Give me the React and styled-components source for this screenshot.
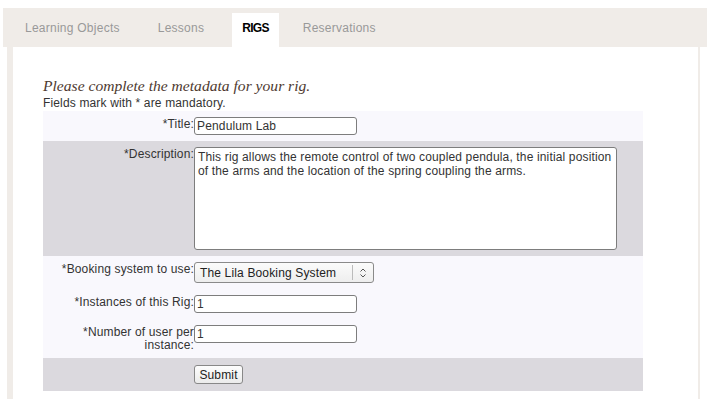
import React from 'react'
import styled, { createGlobalStyle } from 'styled-components'

const GlobalStyle = createGlobalStyle`
  html, body {
    margin: 0;
    padding: 0;
    background: #ffffff;
    overflow: hidden;
  }
  body {
    font-family: "Liberation Sans", Arial, sans-serif;
    font-size: 12px;
    letter-spacing: 0.15px;
    color: #333333;
  }
`

const tabs = ['Learning Objects', 'Lessons', 'RIGS', 'Reservations']

const fields = [
  { label: '*Title:', kind: 'input', value: 'Pendulum Lab', shade: 'light' },
  { label: '*Description:', kind: 'textarea', shade: 'dark',
    value: 'This rig allows the remote control of two coupled pendula, the initial position of the arms and the location of the spring coupling the arms.' },
  { label: '*Booking system to use:', kind: 'select', value: 'The Lila Booking System', shade: 'light' },
  { label: '*Instances of this Rig:', kind: 'input', value: '1', shade: 'light' },
  { label: '*Number of user per instance:', kind: 'input', value: '1', shade: 'light' },
]

function App() {
  return (
    <Page>
      <GlobalStyle />
      <TabBar>
        {tabs.map((t) => (
          <Tab key={t} active={t === 'RIGS'}>{t}</Tab>
        ))}
      </TabBar>
      <Panel>
        <Heading>Please complete the metadata for your rig.</Heading>
        <Note>Fields mark with * are mandatory.</Note>
        <Form>
          {fields.map((f) => (
            <Row key={f.label} shade={f.shade}>
              <Label>{f.label}</Label>
              <Cell>
                {f.kind === 'input' && <TextInput defaultValue={f.value} spellCheck={false} />}
                {f.kind === 'textarea' && <TextArea defaultValue={f.value} spellCheck={false} />}
                {f.kind === 'select' && (
                  <FakeSelect>
                    <span>{f.value}</span>
                    <Arrows>
                      <svg width="8" height="10" viewBox="0 0 8 10">
                        <path d="M1.5 3.5 L4 1 L6.5 3.5 M1.5 6.5 L4 9 L6.5 6.5" fill="none" stroke="#555" strokeWidth="1" />
                      </svg>
                    </Arrows>
                  </FakeSelect>
                )}
              </Cell>
            </Row>
          ))}
          <Row shade="dark">
            <Label />
            <Cell>
              <SubmitButton>Submit</SubmitButton>
            </Cell>
          </Row>
        </Form>
      </Panel>
    </Page>
  )
}

const Page = styled.div`
  padding: 8px 0 0 3px;
  width: 720px;
`

const TabBar = styled.div`
  display: flex;
  align-items: flex-end;
  height: 39px;
  background: #f0ece8;
  padding-left: 12px;
`

const Tab = styled.div`
  height: 34px;
  line-height: 30px;
  padding: 0 10px;
  margin-right: ${(p) => (p.active ? '14px' : '18px')};
  font-size: 12px;
  color: ${(p) => (p.active ? '#000000' : '#999999')};
  font-weight: ${(p) => (p.active ? 'bold' : 'normal')};
  background: ${(p) => (p.active ? '#ffffff' : 'transparent')};
  letter-spacing: ${(p) => (p.active ? '-0.7px' : '0.25px')};
`

const Panel = styled.div`
  margin-left: 4px;
  width: 693px;
  border-left: 6px solid #f0ece8;
  border-right: 2px solid #f0ece8;
  padding: 30px 0 40px 30px;
  box-sizing: border-box;
`

const Heading = styled.div`
  font-family: "Liberation Serif", "Times New Roman", serif;
  font-style: italic;
  font-size: 15.6px;
  line-height: 18px;
  letter-spacing: 0;
  color: #4e3a30;
`

const Note = styled.div`
  font-size: 12px;
  line-height: 16px;
  color: #333333;
`

const Form = styled.div`
  width: 600px;
`

const Row = styled.div`
  display: grid;
  grid-template-columns: 151px 1fr;
  padding: 6px 0;
  background: ${(p) => (p.shade === 'dark' ? '#dbd9de' : '#f9f8fd')};
`

const Label = styled.div`
  text-align: right;
  padding-top: 1px;
  line-height: 13px;
  color: #333333;
`

const Cell = styled.div`
  display: flex;
  align-items: flex-start;
`

const TextInput = styled.input`
  width: 163px;
  height: 18px;
  box-sizing: border-box;
  border: 1px solid #7d7d7d;
  border-radius: 3px;
  padding: 0 2px;
  font-family: "Liberation Sans", Arial, sans-serif;
  font-size: 12px;
  letter-spacing: 0.15px;
  color: #333333;
  background: #ffffff;
`

const TextArea = styled.textarea`
  width: 423px;
  height: 103px;
  box-sizing: border-box;
  border: 1px solid #7d7d7d;
  border-radius: 3px;
  padding: 2px 3px;
  resize: none;
  font-family: "Liberation Sans", Arial, sans-serif;
  font-size: 12px;
  letter-spacing: 0.15px;
  line-height: 14px;
  color: #333333;
  background: #ffffff;
`

const FakeSelect = styled.div`
  display: flex;
  align-items: center;
  width: 180px;
  height: 21px;
  box-sizing: border-box;
  border: 1px solid #8a8a8a;
  border-radius: 3px;
  background: linear-gradient(#fbfbfb, #eeeeee);
  font-size: 12px;
  color: #222222;
  span {
    flex: 1;
    padding-left: 5px;
  }
`

const Arrows = styled.div`
  width: 20px;
  height: 15px;
  border-left: 1px solid #bbbbbb;
  display: flex;
  align-items: center;
  justify-content: center;
`

const SubmitButton = styled.button`
  width: 49px;
  height: 19px;
  margin: 1px 0;
  padding: 0;
  border: 1px solid #888888;
  border-radius: 3px;
  background: linear-gradient(#fdfdfd, #ebebeb);
  font-family: "Liberation Sans", Arial, sans-serif;
  font-size: 12px;
  letter-spacing: 0.15px;
  color: #222222;
`

export default App
